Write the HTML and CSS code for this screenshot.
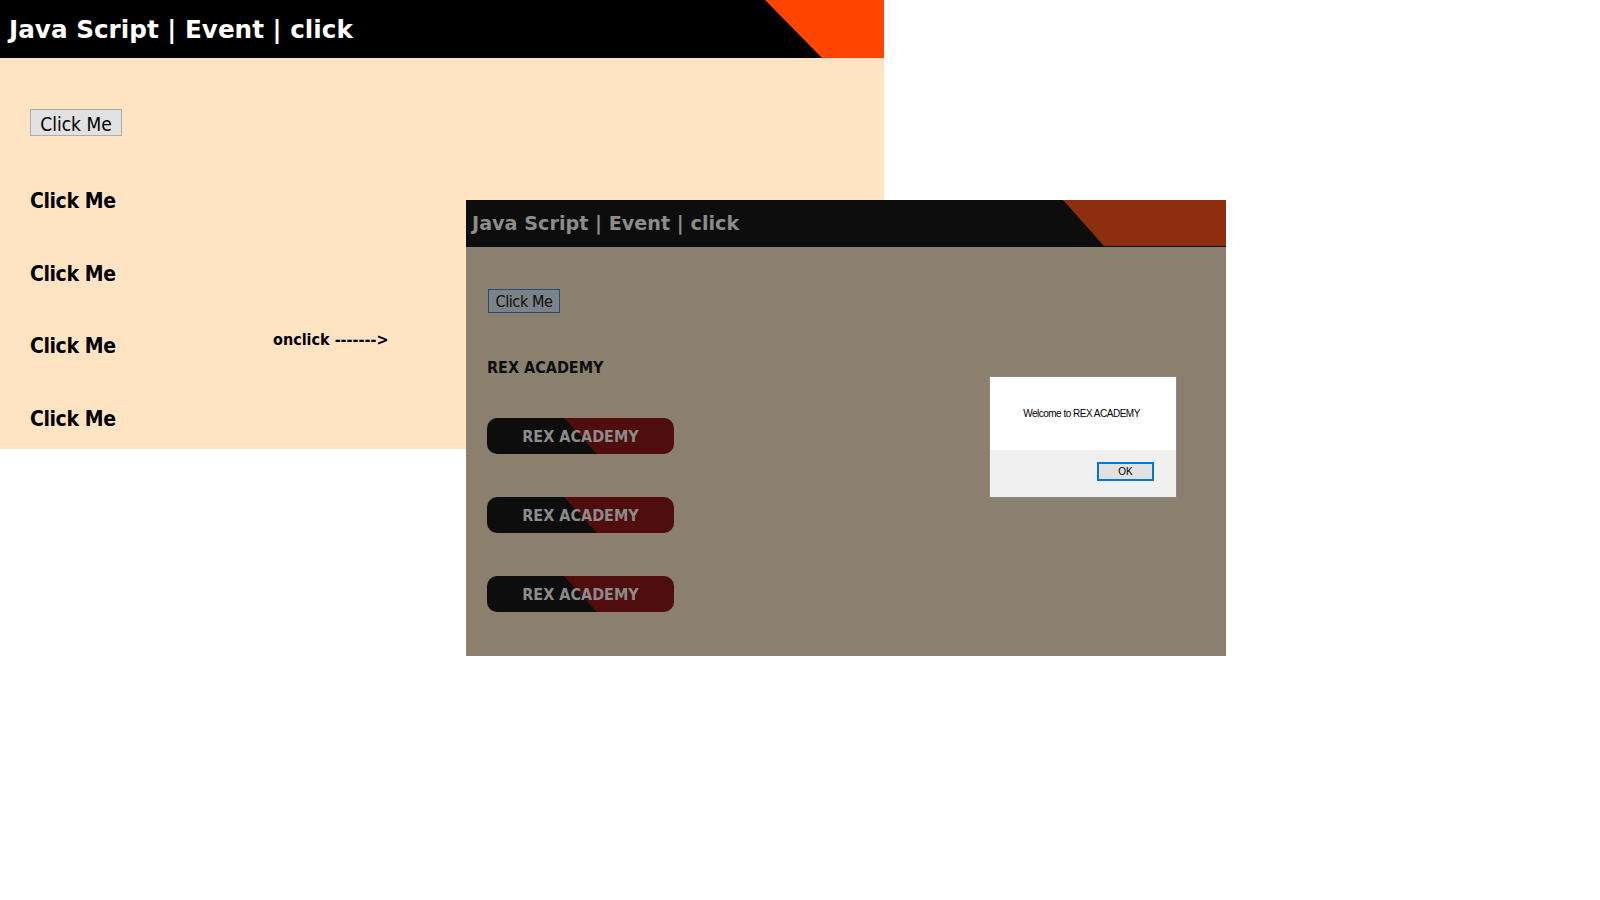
FILE: index.html
```html
<!DOCTYPE html>
<html lang="en">
<head>
<meta charset="utf-8">
<title>Java Script | Event | click</title>
<link rel="stylesheet" href="styles.css">
</head>
<body>
<main class="canvas">
  <section class="page page-light">
    <header class="bar bar-light">
      <h1 class="bar-title">Java Script | Event | click</h1>
      <div class="bar-corner"></div>
    </header>
    <div class="page-body">
      <button class="btn btn-light" type="button">Click Me</button>
      <div class="rows">
        <div class="heads">
          <h2 class="head">Click Me</h2>
          <h2 class="head">Click Me</h2>
          <h2 class="head">Click Me</h2>
          <h2 class="head">Click Me</h2>
        </div>
        <p class="onclick">onclick -------&gt;</p>
      </div>
    </div>
  </section>

  <section class="page page-dark">
    <header class="bar bar-dark">
      <h1 class="bar-title">Java Script | Event | click</h1>
      <div class="bar-corner"></div>
    </header>
    <div class="page-body">
      <button class="btn btn-dark" type="button">Click Me</button>
      <h2 class="label">REX ACADEMY</h2>
      <div class="pills">
        <div class="pill">REX ACADEMY</div>
        <div class="pill">REX ACADEMY</div>
        <div class="pill">REX ACADEMY</div>
      </div>
    </div>
    <div class="dialog">
      <div class="dialog-msg">Welcome to REX ACADEMY</div>
      <div class="dialog-foot"><button class="dialog-ok" type="button">OK</button></div>
    </div>
  </section>
</main>
</body>
</html>
```
FILE: styles.css
```css
* { box-sizing: border-box; }
html, body { margin: 0; padding: 0; background: #ffffff; }
body { font-family: "DejaVu Sans", Verdana, sans-serif; }

.canvas { position: relative; width: 1600px; height: 900px; }

.page { display: flex; flex-direction: column; }
.page-light { width: 884px; height: 449px; background: #ffe4c4; }
.page-dark {
  position: absolute; left: 466px; top: 200px;
  width: 760px; height: 456px; background: #8b7f6e;
}

.bar { display: flex; align-items: center; }
.bar-title { margin: 0; font-weight: bold; white-space: nowrap; line-height: normal; }
.bar-corner { margin-left: auto; align-self: stretch; }

.bar-light { height: 58px; background: #000; padding-left: 9px; }
.bar-light .bar-title { color: #fff; font-size: 24.7px; }
.bar-light .bar-corner {
  width: 119px; background: #ff4500;
  clip-path: polygon(0 0, 100% 0, 100% 100%, 57px 100%);
}

.bar-dark { height: 47px; background: #0d0d0d; padding-left: 6px; padding-bottom: 1px; }
.bar-dark .bar-title { color: #8c8c8c; font-size: 19.2px; }
.bar-dark .bar-corner {
  width: 163px; background: #8d2f0e;
  clip-path: polygon(0 0, 100% 0, 100% 100%, 41px 100%);
}

.btn {
  font-family: "DejaVu Sans Condensed", "DejaVu Sans", sans-serif;
  font-weight: normal; margin: 0; display: flex;
  align-items: center; justify-content: center; line-height: 1;
}
.btn-light {
  width: 92px; height: 27px; font-size: 19px; color: #000; padding: 3px 0 0 0;
  background: #e1e1e1; border: 1px solid #adadad;
}
.btn-dark {
  width: 72px; height: 24px; font-size: 16px; letter-spacing: -0.4px; color: #0d0d0d;
  padding: 2px 0 0 0;
  background: #7d8288; border: 1px solid #1d4f7a; margin-left: 1px;
}

.page-light .page-body { padding: 51px 0 0 30px; }

.rows { display: grid; grid-template-columns: 243px auto; align-items: start; margin-top: 52.7px; }
.heads { display: flex; flex-direction: column; gap: 48.9px; }
.head {
  margin: 0; font-family: "DejaVu Sans Condensed", "DejaVu Sans", sans-serif;
  font-weight: bold; font-size: 21px; line-height: 24px; letter-spacing: -0.4px; color: #000;
}
.onclick {
  margin: 141px 0 0 0; font-family: "DejaVu Sans Condensed", "DejaVu Sans", sans-serif;
  font-weight: bold; font-size: 16px; line-height: 19px; color: #000; white-space: nowrap;
}

.page-dark .page-body { padding: 42px 0 0 21px; display: flex; flex-direction: column; align-items: flex-start; }
.label {
  margin: 45px 0 0 0; font-family: "DejaVu Sans Condensed", "DejaVu Sans", sans-serif;
  font-weight: bold; font-size: 16px; line-height: 19px; color: #0d0d0d;
}
.pills { display: flex; flex-direction: column; gap: 43px; margin-top: 41px; }
.pill {
  width: 187px; height: 36px; border-radius: 10px;
  background: linear-gradient(47.5deg, #0d0d0d 49.8%, #500d0d 50.2%);
  display: flex; align-items: center; justify-content: center;
  font-family: "DejaVu Sans Condensed", "DejaVu Sans", sans-serif;
  font-weight: bold; font-size: 16px; color: #8c8c8c;
}

.dialog {
  position: absolute; left: 523px; top: 176px; width: 188px; height: 122px;
  border: 1px solid #8a8a8a; background: #fff; display: flex; flex-direction: column;
}
.dialog-msg {
  height: 73px; display: flex; align-items: center; justify-content: center;
  font-family: "Liberation Sans", Arial, sans-serif; font-size: 10px;
  letter-spacing: -0.5px; color: #000; padding: 0 3px 1px 0;
}
.dialog-foot {
  flex: 1; background: #f0f0f0; display: flex; justify-content: flex-end;
  align-items: flex-start; padding: 12px 22px 0 0;
}
.dialog-ok {
  width: 57px; height: 19px; padding: 0; margin: 0;
  background: #e1e1e1; border: 2px solid #0078d7;
  font-family: "Liberation Sans", Arial, sans-serif; font-size: 10px; color: #000;
  display: flex; align-items: center; justify-content: center; line-height: 1;
}
```
